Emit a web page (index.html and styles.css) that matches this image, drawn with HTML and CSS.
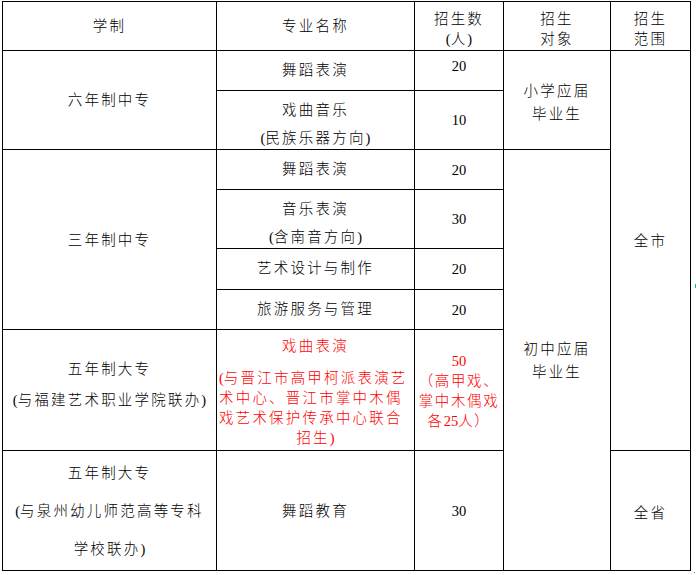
FILE: index.html
```html
<!DOCTYPE html>
<html lang="zh-CN">
<head>
<meta charset="utf-8">
<title>招生计划</title>
<link rel="stylesheet" href="styles.css">
</head>
<body>
<div class="sheet">
  <div class="c hd"><div class="t">学制</div></div>
  <div class="c hd"><div class="t">专业名称</div></div>
  <div class="c hd2"><div class="t">招生数<br><span class="num">(</span>人<span class="num">)</span></div></div>
  <div class="c hd2"><div class="t">招生<br>对象</div></div>
  <div class="c hd2"><div class="t">招生<br>范围</div></div>

  <div class="c span2"><div class="t">六年制中专</div></div>
  <div class="c top"><div class="t">舞蹈表演</div></div>
  <div class="c up"><div class="t num">20</div></div>
  <div class="c span2 target-a"><div class="t">小学应届<br>毕业生</div></div>
  <div class="c span7 city"><div class="t">全市</div></div>

  <div class="c top"><div class="t">戏曲音乐<br><span class="num">(</span>民族乐器方向<span class="num">)</span></div></div>
  <div class="c"><div class="t num">10</div></div>

  <div class="c span4"><div class="t">三年制中专</div></div>
  <div class="c top"><div class="t">舞蹈表演</div></div>
  <div class="c"><div class="t num">20</div></div>
  <div class="c span6 target-b"><div class="t">初中应届<br>毕业生</div></div>

  <div class="c top"><div class="t">音乐表演<br><span class="num">(</span>含南音方向<span class="num">)</span></div></div>
  <div class="c"><div class="t num">30</div></div>

  <div class="c top"><div class="t">艺术设计与制作</div></div>
  <div class="c"><div class="t num">20</div></div>

  <div class="c top"><div class="t">旅游服务与管理</div></div>
  <div class="c"><div class="t num">20</div></div>

  <div class="c five-a"><div class="t">五年制大专<br><span class="num">(</span>与福建艺术职业学院联办<span class="num">)</span></div></div>
  <div class="c top red red-major">
    <div class="red-title">戏曲表演</div>
    <div class="red-sub"><span class="num">(</span>与晋江市高甲柯派表演艺<br>术中心、晋江市掌中木偶<br>戏艺术保护传承中心联合</div>
    <div class="red-last">招生<span class="num">)</span></div>
  </div>
  <div class="c top red red-count"><div class="t"><span class="num">50</span><br>（高甲戏、<br>掌中木偶戏<br>各<span class="num">25</span>人）</div></div>

  <div class="c five-b"><div class="t">五年制大专<br><span class="num">(</span>与泉州幼儿师范高等专科<br>学校联办<span class="num">)</span></div></div>
  <div class="c"><div class="t">舞蹈教育</div></div>
  <div class="c"><div class="t num">30</div></div>
  <div class="c province"><div class="t">全省</div></div>
</div>
<span class="mark mark-side"></span>
<span class="mark mark-bottom"></span>
<span class="mark mark-corner"></span>
</body>
</html>
```

FILE: styles.css
```css
html, body {
  background: #fff;
}

body {
  margin: 1px 0 0 2px;
  font-family: "Liberation Serif", "Noto Sans CJK SC", serif;
  font-size: 14.5px;
  font-weight: 300;
  color: #000;
  position: relative;
  height: 572px;
  overflow: hidden;
}

.sheet {
  display: inline-grid;
  grid-template-columns: 213px 197px 88px 106px 79px;
  grid-template-rows: 48px 39px 58px 39px 58px 40px 39px 120px 119px;
  gap: 1px;
  padding: 1px;
  background: #000;
  vertical-align: top;
}

.c {
  background: #fff;
  display: flex;
  flex-direction: column;
  justify-content: center;
  align-items: center;
  text-align: center;
  letter-spacing: 2.2px;
  white-space: nowrap;
  line-height: 20px;
  overflow: hidden;
}

.num {
  letter-spacing: 0;
}

.hd2 {
  justify-content: flex-start;
  padding-top: 7px;
  line-height: 20px;
}

.top {
  justify-content: flex-start;
  padding-top: 5px;
  line-height: 28px;
}

.up {
  padding-bottom: 10px;
}

.span2 { grid-row: span 2; }
.span4 { grid-row: span 4; }
.span6 { grid-row: span 6; }
.span7 { grid-row: span 7; }

.target-a {
  line-height: 23px;
  padding-top: 6px;
}

.target-b {
  line-height: 23px;
  padding-top: 2px;
}

.city {
  padding-bottom: 19px;
}

.province {
  padding-top: 5px;
}

.five-a {
  line-height: 31px;
  padding-bottom: 10px;
}

.five-b {
  line-height: 38px;
}

.red {
  color: #ff0000;
}

.red-major {
  padding-top: 2px;
  align-items: stretch;
}

.red-title {
  line-height: 28px;
}

.red-sub {
  margin-top: 8px;
  line-height: 20px;
  text-align: left;
  padding-left: 2px;
}

.red-last {
  line-height: 20px;
}

.red-count {
  padding-top: 21px;
  line-height: 20px;
  letter-spacing: 1.6px;
}

.mark {
  position: absolute;
  background: #1fb27a;
}

.mark-side {
  left: 693px;
  top: 283px;
  width: 1px;
  height: 4px;
}

.mark-bottom {
  left: 343px;
  top: 572px;
  width: 5px;
  height: 1px;
}

.mark-corner {
  left: 692px;
  top: 571px;
  width: 1px;
  height: 2px;
}
```
